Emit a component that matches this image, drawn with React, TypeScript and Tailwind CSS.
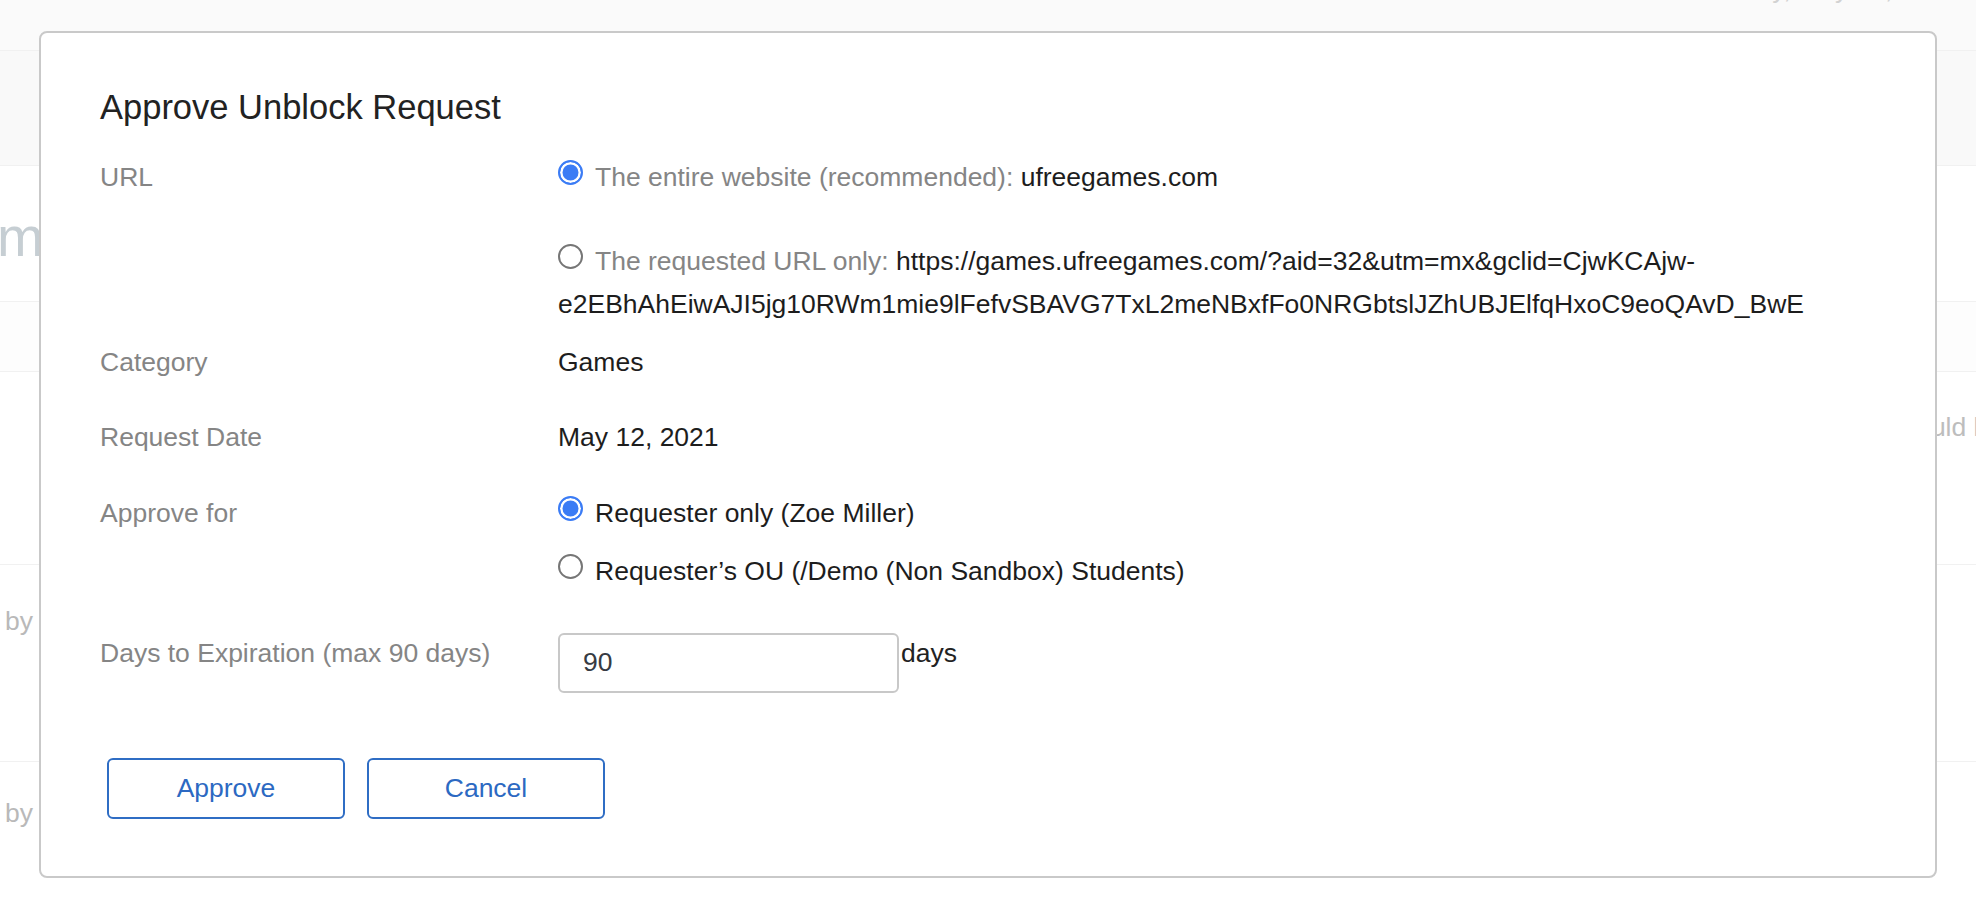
import React from 'react';

function Radio({ checked }: { checked?: boolean }) {
  if (checked) {
    return (
      <span className="mr-[12px] inline-block h-[25px] w-[25px] rounded-full border-2 border-[#3b7cf5] bg-[#3b7cf5] align-[1px] shadow-[inset_0_0_0_2.5px_#ffffff]" />
    );
  }
  return <span className="mr-[12px] inline-block h-[25px] w-[25px] rounded-full border-2 border-[#767676] bg-white align-[1px]" />;
}

function Row({ label, children, className = '' }: { label: string; children: React.ReactNode; className?: string }) {
  return (
    <div className={`flex ${className}`}>
      <div className="w-[458px] shrink-0 leading-[40px] text-[#858585]">{label}</div>
      <div className="min-w-0 flex-1 text-[#1d1d1d]">{children}</div>
    </div>
  );
}

export default function App() {
  return (
    <div className="relative h-[910px] w-full overflow-hidden bg-white font-['Liberation_Sans',Arial,sans-serif] text-[26.5px]">
      {/* page behind the dialog */}
      <div className="flex h-full flex-col">
        <div className="h-[51px] shrink-0 overflow-hidden border-b border-[#f1f1f1] bg-[#fafafa]">
          <div className="-mt-[24px] whitespace-nowrap pl-[1646px] leading-[26px] text-[#d2d2d2]">Wednesday, May 12, 2021</div>
        </div>
        <div className="h-[115px] shrink-0 border-b border-[#f1f1f1] bg-[#f9f9f9]" />
        <div className="h-[136px] shrink-0 border-b border-[#f1f1f1] pt-[43px]">
          <div className="-ml-[3px] text-[56px] leading-none text-[#c6ced3]">m</div>
        </div>
        <div className="h-[70px] shrink-0 border-b border-[#f1f1f1] bg-[#fdfdfd]" />
        <div className="h-[193px] shrink-0 border-b border-[#f1f1f1] pt-[35px]">
          <div className="whitespace-nowrap pl-[1897px] leading-[40px] text-[#bdbdbd]">would load</div>
        </div>
        <div className="h-[197px] shrink-0 border-b border-[#f1f1f1] pt-[36px]">
          <div className="pl-[5px] leading-[40px] text-[#b9b9b9]">by</div>
        </div>
        <div className="flex-1 pt-[31px]">
          <div className="pl-[5px] leading-[40px] text-[#b9b9b9]">by</div>
        </div>
      </div>

      {/* dialog */}
      <div className="absolute left-[39px] top-[31px] w-[1898px] rounded-[8px] border-2 border-[#c9c9c9] bg-white px-[59px] pb-[57px] pt-[54px]">
        <h2 className="text-[34.5px] leading-[40px] text-[#222222]">Approve Unblock Request</h2>

        <Row label="URL" className="mt-[30px]">
          <div className="leading-[40px]">
            <Radio checked />
            <span className="text-[#858585]">The entire website (recommended): </span>
            <span>ufreegames.com</span>
          </div>
          <div className="mt-[43px] leading-[43px]">
            <Radio />
            <span className="text-[#858585]">The requested URL only: </span>
            <span>
              https://games.ufreegames.com/?aid=32&amp;utm=mx&amp;gclid=CjwKCAjw-e2EBhAhEiwAJI5jg10RWm1mie9lFefvSBAVG7TxL2meNBxfFo0NRGbtslJZhUBJElfqHxoC9eoQAvD_BwE
            </span>
          </div>
        </Row>

        <Row label="Category" className="mt-[16px]">
          <div className="leading-[40px]">Games</div>
        </Row>

        <Row label="Request Date" className="mt-[35px]">
          <div className="leading-[40px]">May 12, 2021</div>
        </Row>

        <Row label="Approve for" className="mt-[36px]">
          <div className="leading-[40px]">
            <Radio checked />
            Requester only (Zoe Miller)
          </div>
          <div className="mt-[18px] leading-[40px]">
            <Radio />
            Requester’s OU (/Demo (Non Sandbox) Students)
          </div>
        </Row>

        <Row label="Days to Expiration (max 90 days)" className="mt-[42px]">
          <div className="flex items-start">
            <div className="flex h-[60px] w-[341px] items-center rounded-[6px] border-2 border-[#c8c8c8] pl-[23px] text-[#363b43]">90</div>
            <span className="ml-[2px] leading-[40px] text-[#222222]">days</span>
          </div>
        </Row>

        <div className="ml-[7px] mt-[65px] flex gap-[22px]">
          <button className="h-[61px] w-[238px] rounded-[6px] border-2 border-[#2f6dc4] bg-white text-[#2c69c2]">Approve</button>
          <button className="h-[61px] w-[238px] rounded-[6px] border-2 border-[#2f6dc4] bg-white text-[#2c69c2]">Cancel</button>
        </div>
      </div>
    </div>
  );
}
